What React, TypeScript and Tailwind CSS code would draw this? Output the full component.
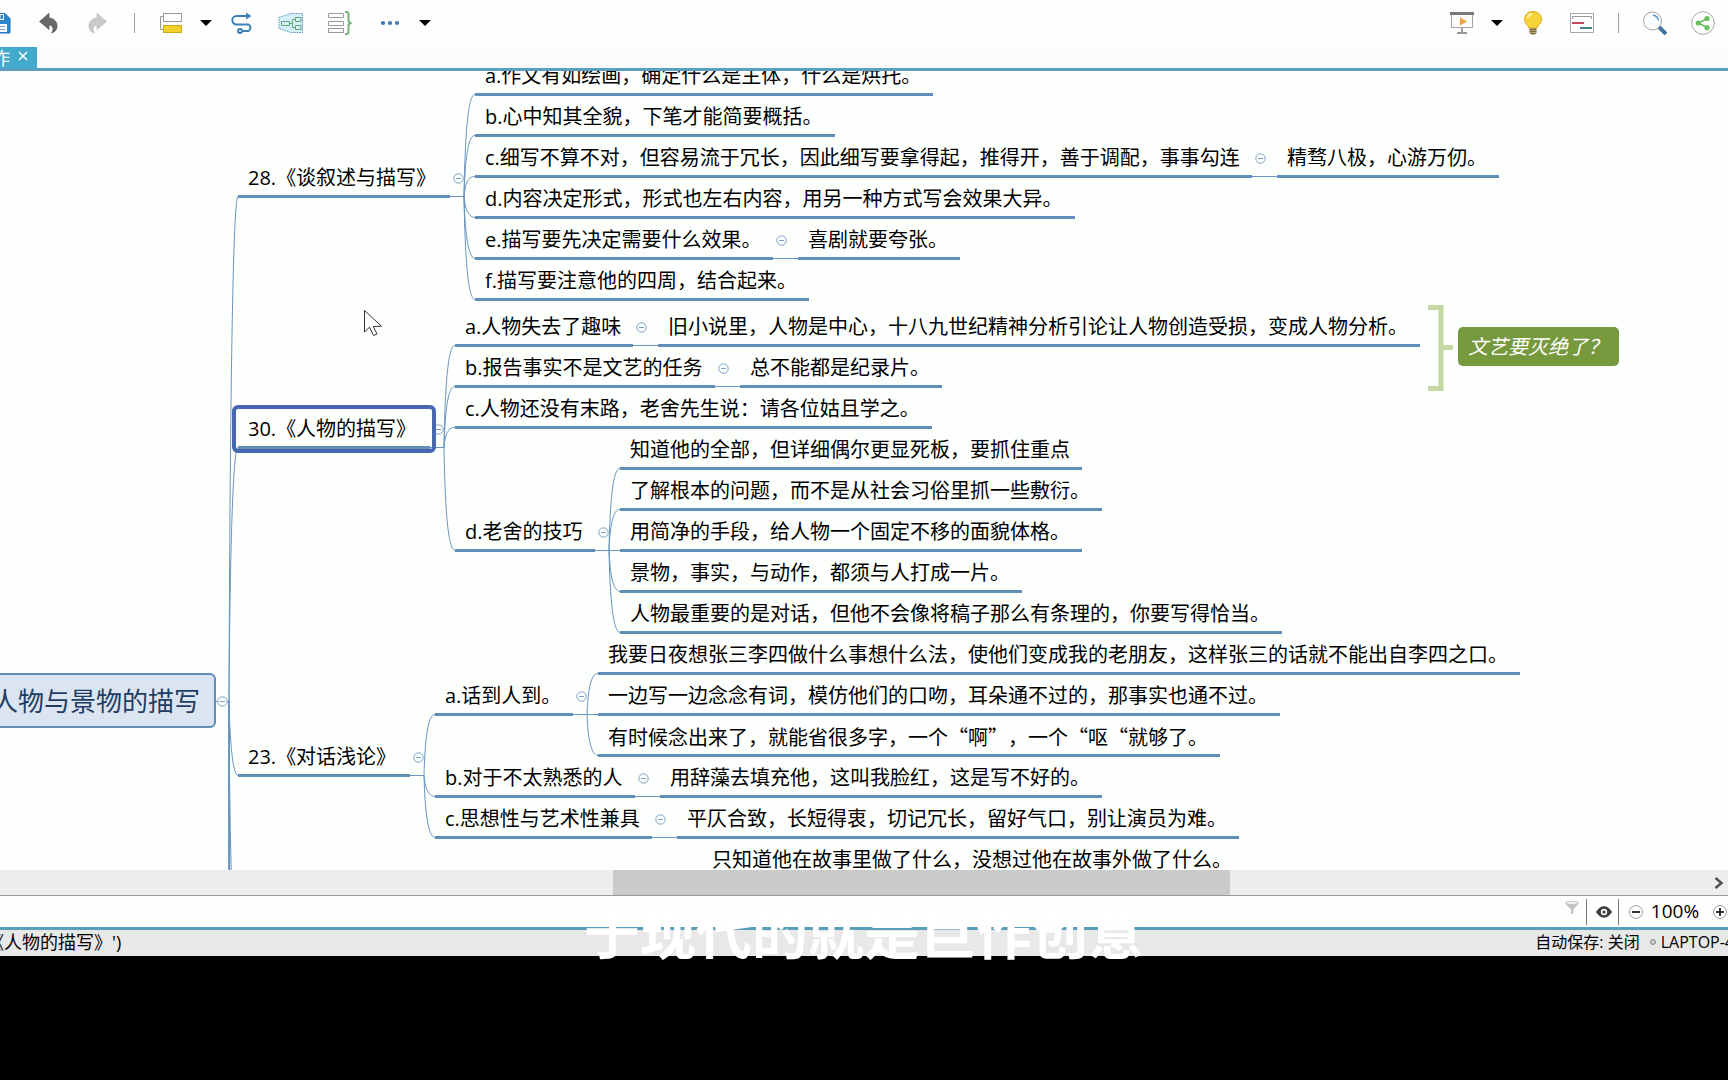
import { useState, type ReactNode } from "react";
import { clsx } from "clsx";

interface Topic {
  id: string;
  text: string;
  // x: left end of the underline, y: underline, w: underline length
  x: number;
  y: number;
  w: number;
  wideQuotes?: boolean;
  children?: Topic[];
}

const ROOT = { x: 216, y: 630, trunk: 229 };

const TOPICS: Topic[] = [
  {
    id: "28",
    text: "28.《谈叙述与描写》",
    x: 238,
    y: 125,
    w: 212,
    children: [
      { id: "28a", text: "a.作文有如绘画，确定什么是主体，什么是烘托。", x: 475, y: 23, w: 458 },
      { id: "28b", text: "b.心中知其全貌，下笔才能简要概括。", x: 475, y: 64, w: 360 },
      {
        id: "28c",
        text: "c.细写不算不对，但容易流于冗长，因此细写要拿得起，推得开，善于调配，事事勾连",
        x: 475,
        y: 105,
        w: 777,
        children: [{ id: "28c1", text: "精骛八极，心游万仞。", x: 1277, y: 105, w: 222 }],
      },
      { id: "28d", text: "d.内容决定形式，形式也左右内容，用另一种方式写会效果大异。", x: 475, y: 146, w: 600 },
      {
        id: "28e",
        text: "e.描写要先决定需要什么效果。",
        x: 475,
        y: 187,
        w: 298,
        children: [{ id: "28e1", text: "喜剧就要夸张。", x: 798, y: 187, w: 162 }],
      },
      { id: "28f", text: "f.描写要注意他的四周，结合起来。", x: 475, y: 228, w: 334 },
    ],
  },
  {
    id: "30",
    text: "30.《人物的描写》",
    x: 238,
    y: 376,
    w: 192,
    children: [
      {
        id: "30a",
        text: "a.人物失去了趣味",
        x: 455,
        y: 274,
        w: 178,
        children: [
          {
            id: "30a1",
            text: "旧小说里，人物是中心，十八九世纪精神分析引论让人物创造受损，变成人物分析。",
            x: 658,
            y: 274,
            w: 762,
          },
        ],
      },
      {
        id: "30b",
        text: "b.报告事实不是文艺的任务",
        x: 455,
        y: 315,
        w: 260,
        children: [{ id: "30b1", text: "总不能都是纪录片。", x: 740, y: 315, w: 202 }],
      },
      { id: "30c", text: "c.人物还没有末路，老舍先生说：请各位姑且学之。", x: 455, y: 356, w: 477 },
      {
        id: "30d",
        text: "d.老舍的技巧",
        x: 455,
        y: 479,
        w: 140,
        children: [
          { id: "30d1", text: "知道他的全部，但详细偶尔更显死板，要抓住重点", x: 620, y: 397, w: 462 },
          { id: "30d2", text: "了解根本的问题，而不是从社会习俗里抓一些敷衍。", x: 620, y: 438, w: 482 },
          { id: "30d3", text: "用简净的手段，给人物一个固定不移的面貌体格。", x: 620, y: 479, w: 462 },
          { id: "30d4", text: "景物，事实，与动作，都须与人打成一片。", x: 620, y: 520, w: 402 },
          { id: "30d5", text: "人物最重要的是对话，但他不会像将稿子那么有条理的，你要写得恰当。", x: 620, y: 561, w: 662 },
        ],
      },
    ],
  },
  {
    id: "23",
    text: "23.《对话浅论》",
    x: 238,
    y: 704,
    w: 172,
    children: [
      {
        id: "23a",
        text: "a.话到人到。",
        x: 435,
        y: 643,
        w: 138,
        children: [
          {
            id: "23a1",
            text: "我要日夜想张三李四做什么事想什么法，使他们变成我的老朋友，这样张三的话就不能出自李四之口。",
            x: 598,
            y: 602,
            w: 922,
          },
          {
            id: "23a2",
            text: "一边写一边念念有词，模仿他们的口吻，耳朵通不过的，那事实也通不过。",
            x: 598,
            y: 643,
            w: 682,
          },
          {
            id: "23a3",
            text: "有时候念出来了，就能省很多字，一个“啊”，一个“呕“就够了。",
            x: 598,
            y: 684,
            w: 622,
            wideQuotes: true,
          },
        ],
      },
      {
        id: "23b",
        text: "b.对于不太熟悉的人",
        x: 435,
        y: 725,
        w: 200,
        children: [{ id: "23b1", text: "用辞藻去填充他，这叫我脸红，这是写不好的。", x: 660, y: 725, w: 442 }],
      },
      {
        id: "23c",
        text: "c.思想性与艺术性兼具",
        x: 435,
        y: 766,
        w: 217,
        children: [
          { id: "23c1", text: "平仄合致，长短得衷，切记冗长，留好气口，别让演员为难。", x: 677, y: 766, w: 562 },
        ],
      },
    ],
  },
];

const NEXT_TOPIC: Topic = {
  id: "next",
  text: "只知道他在故事里做了什么，没想过他在故事外做了什么。",
  x: 702,
  y: 807,
  w: 542,
};

function edge(fromX: number, fromY: number, trunkX: number, to: Topic) {
  if (fromY === to.y) return `M${fromX} ${fromY + 0.5}H${to.x}`;
  const bendY = fromY + (to.y - fromY) * 0.6;
  return `M${fromX} ${fromY + 0.5}H${trunkX}C${trunkX + 1} ${bendY} ${trunkX + 4} ${to.y} ${to.x} ${to.y + 0.5}`;
}

function collectEdges(topic: Topic, folded: string[]): string[] {
  if (folded.includes(topic.id)) return [];
  return (topic.children ?? []).flatMap((child) => [
    edge(topic.x + topic.w, topic.y, child.x - 11, child),
    ...collectEdges(child, folded),
  ]);
}

interface ToggleProps {
  x: number;
  y: number;
  label: string;
  folded: boolean;
  onClick: () => void;
}

function Toggle({ x, y, label, folded, onClick }: ToggleProps) {
  return (
    <button
      type="button"
      aria-label={label}
      aria-expanded={!folded}
      onClick={onClick}
      className="absolute size-[11px]"
      style={{ left: x, top: y }}
    >
      <svg viewBox="0 0 11 11" className="size-full" fill="#fbfffd" stroke="#7ba0c6">
        <circle cx="5.5" cy="5.5" r="4.7" />
        <path d={folded ? "M3 5.5h5M5.5 3v5" : "M3 5.5h5"} />
      </svg>
    </button>
  );
}

interface TopicNodeProps {
  topic: Topic;
  folded: string[];
  onToggle: (id: string) => void;
}

function TopicNode({ topic, folded, onToggle }: TopicNodeProps) {
  const isFolded = folded.includes(topic.id);
  return (
    <>
      <div
        className={clsx(
          "absolute flex h-9 items-center whitespace-nowrap border-b-3 border-[#618eb9] pb-px pl-[10px] text-[20px] leading-6 text-black",
          topic.wideQuotes && "font-['Noto_Sans_CJK_SC',sans-serif]",
        )}
        style={{ left: topic.x, top: topic.y - 34, width: topic.w }}
      >
        {topic.text}
      </div>
      {topic.children && (
        <Toggle
          x={topic.x + topic.w + 3}
          y={topic.y - 23}
          label={topic.text}
          folded={isFolded}
          onClick={() => onToggle(topic.id)}
        />
      )}
      {!isFolded &&
        topic.children?.map((child) => (
          <TopicNode key={child.id} topic={child} folded={folded} onToggle={onToggle} />
        ))}
    </>
  );
}

function MindMap() {
  const [folded, setFolded] = useState<string[]>([]);

  const toggle = (id: string) =>
    setFolded((ids) => (ids.includes(id) ? ids.filter((i) => i !== id) : [...ids, id]));

  const showTopics = !folded.includes("root");
  const edges = showTopics
    ? TOPICS.flatMap((topic) => [
        edge(ROOT.x, ROOT.y, ROOT.trunk, topic),
        ...collectEdges(topic, folded),
      ])
    : [];

  return (
    <main className="relative min-h-0 flex-1 overflow-hidden bg-[#fdfffd]">
      <svg className="absolute inset-0 size-full" fill="none" stroke="#6a95bf" aria-hidden="true">
        {edges.map((d) => (
          <path key={d} d={d} />
        ))}
        {/* branches that run on below the visible part */}
        <path d="M229 630Q229 1080 239 1090" />
        <path d="M229 630Q229 1500 239 1520" strokeWidth="2" />
        <path d="M229 630Q230 880 239 905" />
      </svg>

      <div className="absolute -left-10 top-[602px] flex h-[55px] w-64 items-center justify-end rounded-md border-2 border-[#628db9] bg-[#dbe5f1] pr-[14px] text-[26px] leading-8 whitespace-nowrap text-[#1f3d63]">
        人物与景物的描写
      </div>
      <Toggle x={217} y={625} label="人物与景物的描写" folded={!showTopics} onClick={() => toggle("root")} />

      {showTopics &&
        TOPICS.map((topic) => (
          <TopicNode key={topic.id} topic={topic} folded={folded} onToggle={toggle} />
        ))}
      <TopicNode topic={NEXT_TOPIC} folded={folded} onToggle={toggle} />

      {/* selection frame round topic 30 */}
      <div className="pointer-events-none absolute left-[232px] top-[334px] h-12 w-[204px] rounded-md border-4 border-[#4767b0]" />

      <svg
        className="absolute left-[1428px] top-[234px] h-[86px] w-[26px]"
        viewBox="0 0 26 86"
        fill="none"
        stroke="#c5d8a4"
        strokeWidth="5"
        aria-hidden="true"
      >
        <path d="M0 2.5H13V83.5H0M13 42.5H25" />
      </svg>
      <div className="absolute left-[1458px] top-[256px] flex h-[39px] w-[161px] items-center rounded-[5px] bg-[#76993d] pl-[10px] text-[20px] leading-6 whitespace-nowrap text-white italic">
        文艺要灭绝了？
      </div>

      <svg className="absolute left-[363px] top-[238px] h-7 w-5" viewBox="0 0 20 28" aria-hidden="true">
        <path
          d="M1.5 1.5V23L6.5 18.2L10.5 26.5L14 25L10.3 17.5L18.5 17.2Z"
          fill="#fff"
          stroke="#333"
        />
      </svg>
    </main>
  );
}

interface ToolButtonProps {
  label: string;
  className?: string;
  children: ReactNode;
}

function ToolButton({ label, className, children }: ToolButtonProps) {
  return (
    <button type="button" aria-label={label} className={clsx("shrink-0", className)}>
      {children}
    </button>
  );
}

function Caret() {
  return (
    <svg viewBox="0 0 12 6" className="h-[6px] w-3">
      <path d="M0 0h12L6 6z" fill="#000" />
    </svg>
  );
}

const ICON = "size-6";

function Toolbar() {
  return (
    <header className="flex h-[47px] shrink-0 items-center overflow-hidden bg-[#fefefe] pb-px">
      <ToolButton label="保存" className="-ml-3">
        <svg viewBox="0 0 24 24" className={ICON} fill="none">
          <path d="M2 2.5h15l5 5V22H2z" fill="#2b86cf" stroke="#1c6fb4" />
          <path d="M7 3h9v6H7z" fill="#fff" />
          <path d="M12.500 4h2.500v4h-2.500z" fill="#2b86cf" />
          <path d="M5 13h14v8H5z" fill="#fff" />
          <path d="M7 15.500h10M7 18.500h10" stroke="#6aa5d6" />
        </svg>
      </ToolButton>
      <ToolButton label="撤销" className="ml-6">
        <svg viewBox="0 0 24 24" className={ICON}>
          <path
            d="M3.500 10.500L13 2.200V7C19 7.500 21.500 11.500 21 16C20.700 19 19 21 15.500 22C17.500 19.500 18 14.500 13 14V18.500Z"
            fill="#686868"
            stroke="#505050"
            strokeWidth=".6"
          />
        </svg>
      </ToolButton>
      <ToolButton label="重做" className="ml-[25px]">
        <svg viewBox="0 0 24 24" className={ICON}>
          <path
            d="M21.500 10.500L12 2.200V7C6 7.500 3.500 11.500 4 16C4.300 19 6 21 9.500 22C7.500 19.500 7 14.500 12 14V18.500Z"
            fill="#c9c9c9"
            stroke="#b9b9b9"
            strokeWidth=".6"
          />
        </svg>
      </ToolButton>
      <span className="ml-[25px] h-5 w-px bg-[#a0a0a0]" />
      <ToolButton label="主题" className="ml-6">
        <svg viewBox="0 0 24 24" className={ICON} fill="none">
          <path d="M4.500 5.500H1.500V18.500H4.500" stroke="#999" />
          <rect x="4.500" y="2.500" width="18" height="8" fill="#fff" stroke="#999" />
          <rect x="4.500" y="14.500" width="18" height="7" fill="#f3d02c" stroke="#cda91a" />
        </svg>
      </ToolButton>
      <ToolButton label="主题选项" className="ml-[17px]">
        <Caret />
      </ToolButton>
      <ToolButton label="联系" className="ml-[18px]">
        <svg viewBox="0 0 24 24" className={ICON} fill="none" stroke="#3f7fb9" strokeWidth="2">
          <path d="M17 5H6.500A4.200 4.200 0 0 0 6.500 13.400H18.500A3.800 3.800 0 0 1 18.500 20H12.500" />
          <path d="M16 1.500L21.500 5L16 8.500Z" fill="#3f7fb9" stroke="none" />
          <circle cx="10" cy="20" r="2" />
        </svg>
      </ToolButton>
      <ToolButton label="外框" className="ml-6">
        <svg viewBox="0 0 26 24" className="h-6 w-[26px]" fill="#d5f0fb">
          <path d="M1 6.500L13 2.500H24.500V21.500H13L1 17.500Z" stroke="#4e92b6" strokeDasharray="1.500 1" />
          <g fill="none" stroke="#63a76d">
            <path d="M3.500 10.500h8v4h-8zM17.500 6.500h5.500v4h-5.500zM17.500 14.500h5.500v4h-5.500zM11.500 12.500h3M17.500 8.500h-3v8h3" />
          </g>
        </svg>
      </ToolButton>
      <ToolButton label="概要" className="ml-6">
        <svg viewBox="0 0 24 24" className={ICON} fill="none">
          <path
            d="M.5 2.500h15v4H.5zM.5 10.500h15v4H.5zM.5 17.500h15v4H.5z"
            fill="#fff"
            stroke="#999"
          />
          <path
            d="M17 1H18.500Q20.500 1 20.500 3V9.500Q20.500 11.800 23.500 12Q20.500 12.200 20.500 14.500V21Q20.500 23 18.500 23H17"
            stroke="#7cb07c"
            strokeWidth="2"
          />
        </svg>
      </ToolButton>
      <ToolButton label="更多" className="ml-7">
        <svg viewBox="0 0 20 6" className="h-[6px] w-5" fill="#3c78b6">
          <circle cx="3" cy="3" r="2.100" />
          <circle cx="10" cy="3" r="2.100" />
          <circle cx="17" cy="3" r="2.100" />
        </svg>
      </ToolButton>
      <ToolButton label="更多选项" className="ml-[19px]">
        <Caret />
      </ToolButton>

      <ToolButton label="演示" className="ml-auto">
        <svg viewBox="0 0 24 24" className={ICON} fill="none">
          <path d="M1.500 3.500h21v13h-21z" fill="#fbfbfb" stroke="#a5a5a5" />
          <path d="M0 1h24v3H0z" fill="#777" />
          <path d="M10 6.500L17 10.500L10 14.500Z" fill="#eda43c" />
          <path d="M12 17v4M7 22h10" stroke="#777" strokeWidth="1.500" />
        </svg>
      </ToolButton>
      <ToolButton label="演示选项" className="ml-[17px]">
        <Caret />
      </ToolButton>
      <ToolButton label="提示" className="ml-[18px]">
        <svg viewBox="0 0 24 24" className={ICON}>
          <path
            d="M12 .5C6.500 .5 3.500 4.200 3.500 8.500C3.500 12.500 7.500 14 7.800 17H16.200C16.500 14 20.500 12.500 20.500 8.500C20.500 4.200 17.500 .5 12 .5Z"
            fill="#f7d438"
            stroke="#dca51f"
          />
          <path d="M6.500 7Q7.500 3.500 11 3" fill="none" stroke="#fdf0a4" strokeWidth="2" />
          <path d="M8.500 17.500h7v4.500l-2 1.500h-3l-2-1.500z" fill="#7c6a3c" />
          <path d="M8.500 19.500h7M8.500 21.500h7" stroke="#cbbd8d" strokeWidth=".7" />
        </svg>
      </ToolButton>
      <ToolButton label="甘特图" className="ml-[25px]">
        <svg viewBox="0 0 24 24" className={ICON} fill="none">
          <path d="M.5 2.500h23v19H.5z" fill="#fff" stroke="#a2a7ad" />
          <path d="M2.500 8V5.500h19V8" stroke="#999" />
          <path d="M2 12h12" stroke="#c8455b" strokeWidth="2" />
          <path d="M10 17h12" stroke="#45848c" strokeWidth="2" />
        </svg>
      </ToolButton>
      <span className="ml-6 h-5 w-px bg-[#a0a0a0]" />
      <ToolButton label="搜索" className="ml-6">
        <svg viewBox="0 0 24 24" className={ICON} fill="none">
          <path d="M16 16L23 23" stroke="#40739f" strokeWidth="4" />
          <circle cx="9.500" cy="10" r="9" fill="#fafcfd" stroke="#a3a6aa" />
          <path d="M10 4Q14.500 5 15.500 9.500" stroke="#6198c8" strokeWidth="1.500" />
        </svg>
      </ToolButton>
      <ToolButton label="分享" className="mr-[13px] ml-6">
        <svg viewBox="0 0 24 24" className={ICON} fill="none">
          <circle cx="12" cy="12" r="11.300" fill="#fff" stroke="#a5a5a5" />
          <path d="M16 7.500L7.500 12L16 16.500" stroke="#6cba64" strokeWidth="1.500" />
          <g fill="#68c15d">
            <circle cx="16" cy="7.500" r="2.600" />
            <circle cx="7.300" cy="12" r="2.600" />
            <circle cx="16" cy="16.700" r="2.600" />
          </g>
        </svg>
      </ToolButton>
    </header>
  );
}

function TabBar() {
  return (
    <nav className="flex h-6 shrink-0 overflow-hidden border-b-3 border-[#5a9fc2] bg-[#fbfbfc]">
      <div className="flex w-[37px] items-center justify-end bg-[#42aacd] pr-[9px] text-white">
        <span className="text-[18px] leading-5">作</span>
        <button type="button" aria-label="关闭标签" className="ml-2 shrink-0 pb-1">
          <svg viewBox="0 0 10 10" className="size-[10px]" stroke="#fff" strokeWidth="1.500">
            <path d="M1 1L9 9M9 1L1 9" />
          </svg>
        </button>
      </div>
    </nav>
  );
}

function ScrollBar() {
  return (
    <div className="flex h-[26px] shrink-0 items-stretch border-b border-[#999] bg-[#ededed]">
      <div className="w-[35.500%]" />
      <div className="w-[35.700%] bg-[#cacaca]" />
      <button type="button" aria-label="向右滚动" className="mr-1 ml-auto">
        <svg viewBox="0 0 10 12" className="h-3 w-[10px]" fill="none" stroke="#505050" strokeWidth="2.500">
          <path d="M1.500 1L7.500 6L1.500 11" />
        </svg>
      </button>
    </div>
  );
}

function ZoomBar() {
  return (
    <div className="flex h-[34px] shrink-0 items-center justify-end overflow-hidden border-b-3 border-[#5a9fb9] bg-[#fdfefd]">
      <button type="button" aria-label="筛选" className="mr-[7px] pb-2">
        <svg viewBox="0 0 14 14" className="size-[14px]" fill="#c3c3c3">
          <path d="M0 2L6 8.500V13.500L8.500 12V8.500L14 2Z" />
          <ellipse cx="7" cy="2" rx="6.500" ry="1.500" fill="#f4f4f4" stroke="#c3c3c3" />
        </svg>
      </button>
      <span className="h-[26px] w-px bg-[#777]" />
      <button type="button" aria-label="显示" className="mr-[6px] ml-[9px]">
        <svg viewBox="0 0 16 12" className="h-3 w-4">
          <path d="M0 6Q3.500 .3 8 .3T16 6Q12.500 11.700 8 11.700T0 6Z" fill="#3d3d42" />
          <circle cx="8" cy="6" r="3.200" fill="#fff" />
          <circle cx="8" cy="6" r="1.600" fill="#3d3d42" />
        </svg>
      </button>
      <span className="h-[26px] w-px bg-[#777]" />
      <button type="button" aria-label="缩小" className="ml-[10px]">
        <svg viewBox="0 0 14 14" className="size-[14px]" fill="#fff">
          <circle cx="7" cy="7" r="6.400" stroke="#9a9a9a" />
          <path d="M3 7h8" stroke="#333" strokeWidth="2" />
        </svg>
      </button>
      <span className="w-[70px] pr-[6px] pb-[2px] text-center text-[19px] leading-6 text-black">100%</span>
      <button type="button" aria-label="放大" className="mr-px">
        <svg viewBox="0 0 14 14" className="size-[14px]" fill="#fff">
          <circle cx="7" cy="7" r="6.400" stroke="#9a9a9a" />
          <path d="M3 7h8M7 3v8" stroke="#333" strokeWidth="2" />
        </svg>
      </button>
    </div>
  );
}

function StatusBar() {
  return (
    <div className="flex h-[26px] shrink-0 items-center justify-between overflow-hidden bg-[#e8e8e9] pb-[2px] leading-6 whitespace-nowrap text-black">
      <span className="-ml-[14px] text-[18px]">《人物的描写》')</span>
      <div className="-mr-[6px] flex items-center text-[16px]">
        <span>自动保存: 关闭</span>
        <span className="mr-[5px] ml-[10px] size-[6px] rounded-full border border-[#888] bg-[#ccc]" />
        <span>LAPTOP-4</span>
      </div>
    </div>
  );
}

export default function App() {
  return (
    <div
      lang="zh-CN"
      className="flex h-screen flex-col overflow-hidden bg-black font-['Open_Sans','Noto_Sans_CJK_SC',sans-serif] [text-spacing-trim:space-all]"
    >
      <Toolbar />
      <TabBar />
      <MindMap />
      <ScrollBar />
      <ZoomBar />
      <StatusBar />
      <footer className="relative h-[124px] shrink-0 bg-black">
        <p className="absolute inset-x-0 -top-[56px] text-center text-[56px] leading-[64px] font-bold text-white">
          于现代的就是巨作创意
        </p>
      </footer>
    </div>
  );
}
